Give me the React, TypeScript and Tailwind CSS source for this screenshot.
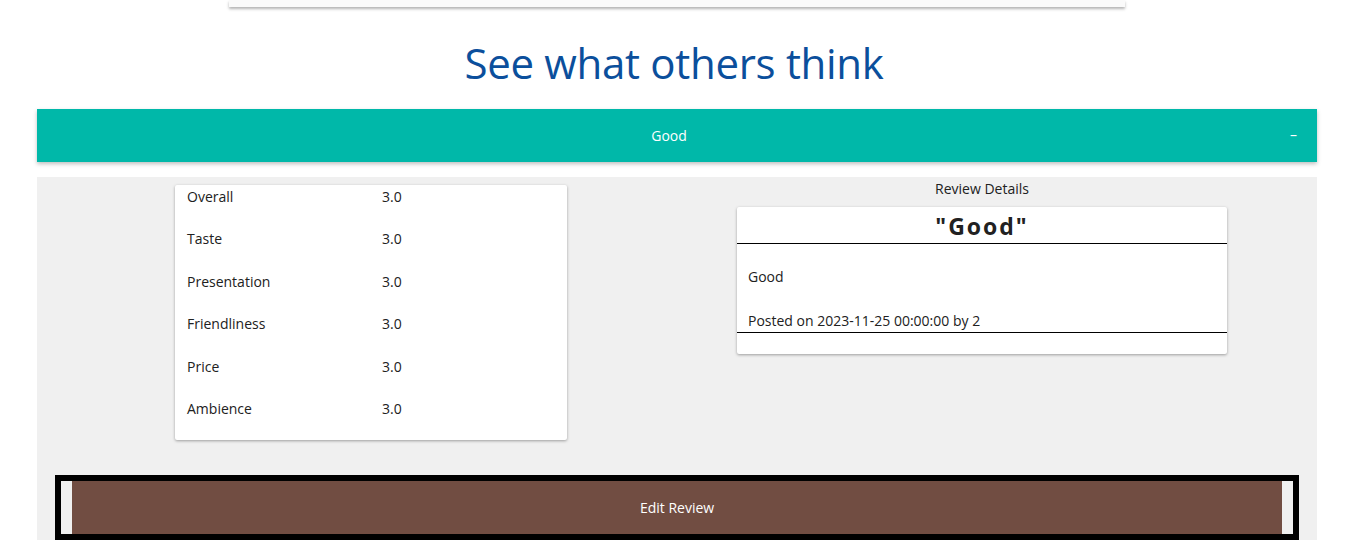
import React from "react";

const rows = [
  ["Overall", "3.0"],
  ["Taste", "3.0"],
  ["Presentation", "3.0"],
  ["Friendliness", "3.0"],
  ["Price", "3.0"],
  ["Ambience", "3.0"],
];

export default function App() {
  return (
    <div
      className="w-[1348px] h-[549px] overflow-hidden bg-white text-[#212121]"
      style={{ fontFamily: '"Open Sans", "Noto Sans", sans-serif' }}
    >
      <div className="ml-[229px] w-[896px] h-[7px] bg-[#fafafa] shadow-[0_2px_3px_rgba(0,0,0,0.3)]" />
      <div className="h-[102px] flex items-center justify-center">
        <h1 className="text-[42px] leading-none text-[#0b4f9c] pt-[10px] tracking-[-0.3px]">See what others think</h1>
      </div>
      <div className="ml-[37px] w-[1280px]">
        <div className="h-[53px] bg-[#00b8a9] text-white flex items-center shadow-[0_2px_4px_rgba(0,0,0,0.25)]">
          <div className="flex-1 text-center text-[14px] pl-[11px]">Good</div>
          <div className="w-[27px] text-[14px] pb-[2px]">–</div>
        </div>
        <div className="mt-[15px] bg-[#f0f0f0] h-[363px]">
          <div className="flex pl-[138px] pt-[8px]">
            <div className="w-[392px] bg-white rounded-[2px] shadow-[0_1px_3px_rgba(0,0,0,0.35)] pt-[1px]">
              {rows.map(([k, v]) => (
                <div key={k} className="h-[42.4px] flex text-[14px] leading-[22px]">
                  <div className="pl-[12px] w-[207px]">{k}</div>
                  <div>{v}</div>
                </div>
              ))}
            </div>
            <div className="ml-[170px] w-[490px] -mt-[7px]">
              <div className="text-center text-[14px] leading-[22px]">Review Details</div>
              <div className="bg-white rounded-[2px] shadow-[0_1px_3px_rgba(0,0,0,0.35)] mt-[7px]">
                <div className="h-[37px] pt-[3px] flex items-center justify-center border-b border-black text-[23px] font-bold tracking-[2px]">
                  "Good"
                </div>
                <div className="px-[11px] text-[14px] leading-[22px] pt-[22px]">Good</div>
                <div className="px-[11px] text-[14px] leading-[22px] pt-[22px] border-b border-black">
                  Posted on 2023-11-25 00:00:00 by 2
                </div>
                <div className="h-[21px]" />
              </div>
            </div>
          </div>
          <div className="mx-[18px] mt-[35px] border-[6px] border-black h-[65px] flex">
            <div className="flex-1 mx-[11px] bg-[#714d42] text-white text-[14px] flex items-center justify-center">
              Edit Review
            </div>
          </div>
        </div>
      </div>
    </div>
  );
}
